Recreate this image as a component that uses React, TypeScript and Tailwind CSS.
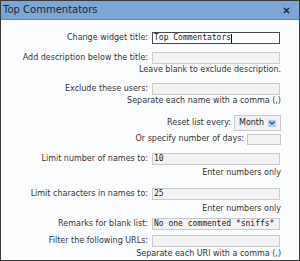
import React from 'react'

const sans = { fontFamily: '"DejaVu Sans", Verdana, sans-serif' }

const Field = ({ value, active }: { value?: string; active?: boolean }) => (
  <div
    className={
      'w-[128px] h-[12px] flex items-center px-[1px] text-[8px] leading-none text-[#222] overflow-hidden whitespace-nowrap font-["DejaVu_Sans_Mono",monospace] border ' +
      (active ? 'border-[#4a4a4a] bg-white' : 'border-[#cacaca] bg-[#f3f3f3]')
    }
  >
    {value}
    {active && <span className="inline-block w-px h-[9px] bg-[#111]" />}
  </div>
)

const Row = ({ label, children, className }: { label: string; children: React.ReactNode; className: string }) => (
  <div className={'flex items-center gap-[4px] ' + className}>
    <div className="w-[147px] text-right whitespace-nowrap">{label}</div>
    {children}
  </div>
)

const Hint = ({ text, className }: { text: string; className: string }) => (
  <div className={'h-[12px] leading-[12px] text-right whitespace-nowrap ' + className}>{text}</div>
)

const App = () => {
  return (
    <div className="w-[300px] h-[261px] box-border border border-[#3a3a3a] bg-[#fcfdff] flex flex-col overflow-hidden" style={sans}>
      <div className="h-[19px] shrink-0 box-border bg-[#7ba6d6] border-b border-[#5a86b8] flex items-center justify-between pl-[2px] pr-[9px]">
        <span className="text-[10px] leading-none text-[#1b2633]">Top Commentators</span>
        <svg width="7" height="7" viewBox="0 0 7 7">
          <path d="M1 1L6 6M6 1L1 6" stroke="#1d2a3c" strokeWidth="1.5" />
        </svg>
      </div>

      <div className="flex flex-col pr-[18px] text-[8px] text-[#333]">
        <Row label="Change widget title:" className="mt-[12px]">
          <Field value="Top Commentators" active />
        </Row>
        <Row label="Add description below the title:" className="mt-[8px]">
          <Field />
        </Row>
        <Hint text="Leave blank to exclude description." className="mt-0" />
        <Row label="Exclude these users:" className="mt-[7px]">
          <Field />
        </Row>
        <Hint text="Separate each name with a comma (,)" className="mt-0" />

        <div className="flex items-center justify-end gap-[3px] mt-[8px]">
          <span>Reset list every:</span>
          <div className="w-[47px] h-[16px] box-border border border-[#cacaca] bg-[#f3f3f3] flex items-center justify-between pl-[4px] pr-[4px]">
            <span className="text-[8px] text-[#222]">Month</span>
            <span className="w-[8px] h-[7px] bg-[#b5cdf0] flex items-center justify-center">
              <svg width="6" height="4" viewBox="0 0 6 4">
                <path d="M0.5 0.5L3 3L5.5 0.5" fill="none" stroke="#2b4f9a" strokeWidth="1.3" />
              </svg>
            </span>
          </div>
        </div>
        <div className="flex items-center justify-end gap-[3px] mt-[2px]">
          <span>Or specify number of days:</span>
          <div className="w-[34px] h-[11px] box-border border border-[#cacaca] bg-[#f3f3f3]" />
        </div>

        <Row label="Limit number of names to:" className="mt-[8px]">
          <Field value="10" />
        </Row>
        <Hint text="Enter numbers only" className="mt-[2px]" />
        <Row label="Limit characters in names to:" className="mt-[9px]">
          <Field value="25" />
        </Row>
        <Hint text="Enter numbers only" className="mt-[3px]" />
        <Row label="Remarks for blank list:" className="mt-[3px]">
          <Field value="No one commented *sniffs*" />
        </Row>
        <Row label="Filter the following URLs:" className="mt-[5px]">
          <Field />
        </Row>
        <Hint text="Separate each URl with a comma (,)" className="mt-[1px]" />
      </div>
    </div>
  )
}

export default App
